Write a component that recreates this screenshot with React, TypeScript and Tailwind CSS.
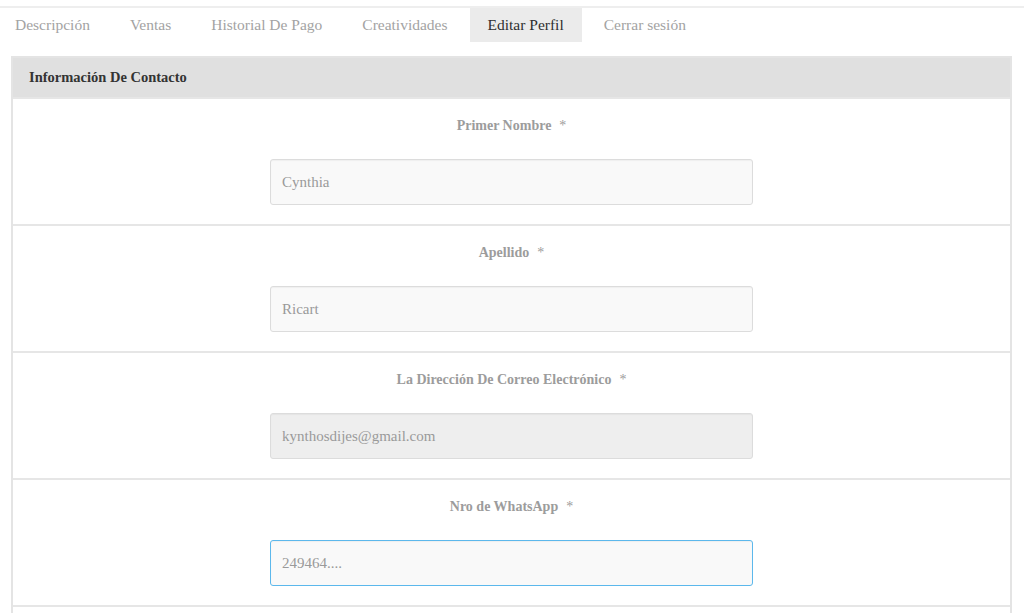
const TABS = [
  { label: 'Descripción' },
  { label: 'Ventas' },
  { label: 'Historial De Pago' },
  { label: 'Creatividades' },
  { label: 'Editar Perfil', active: true },
  { label: 'Cerrar sesión' },
];

const FIELDS = [
  { label: 'Primer Nombre', value: 'Cynthia' },
  { label: 'Apellido', value: 'Ricart' },
  { label: 'La Dirección De Correo Electrónico', value: 'kynthosdijes@gmail.com', disabled: true },
  { label: 'Nro de WhatsApp', value: '249464....', focused: true },
];

export default function App() {
  return (
    <div
      className="h-[613px] w-[1024px] overflow-hidden bg-white pt-[6px]"
      style={{ fontFamily: '"Liberation Serif", "DejaVu Serif", serif' }}
    >
      {/* linea superior + pestañas */}
      <div className="border-t-2 border-[#eeeeee]">
        <ul className="flex gap-[4px]">
          {TABS.map((t, i) => (
            <li
              key={t.label}
              className={
                'flex h-[34px] items-center pr-[18px] text-[15.5px] ' +
                (i === 0 ? 'pl-[15px] ' : 'pl-[18px] ') +
                (t.active ? 'bg-[#ebebeb] text-[#2f2f2f]' : 'text-[#a3a3a3]')
              }
            >
              {t.label}
            </li>
          ))}
        </ul>
      </div>

      {/* panel de contacto */}
      <div className="ml-[11px] mt-[14px] w-[1001px] border-x-2 border-t-2 border-[#e4e4e4]">
        <div className="flex h-[39px] items-center bg-[#e0e0e0] pl-[16px] text-[14.5px] font-bold text-[#333333]">
          Información De Contacto
        </div>
        {FIELDS.map((f) => (
          <div key={f.label} className="border-t-2 border-[#e6e6e6] pb-[19px] pt-[17px]">
            <div className="h-[20px] text-center text-[14px] font-bold leading-[20px] text-[#9c9c9c]">
              {f.label}
              <span className="ml-[8px] font-normal">*</span>
            </div>
            <div
              className={
                'mx-auto mt-[23px] flex h-[46px] w-[483px] items-center rounded-[3px] border px-[11px] text-[15px] text-[#9a9a9a] shadow-[inset_0_1px_1px_rgba(0,0,0,0.04)] ' +
                (f.disabled
                  ? 'border-[#dcdcdc] bg-[#eeeeee]'
                  : f.focused
                    ? 'border-[#5cb8ec] bg-[#f9f9f9]'
                    : 'border-[#dcdcdc] bg-[#f9f9f9]')
              }
            >
              {f.value}
            </div>
          </div>
        ))}
        <div className="h-[20px] border-t-2 border-[#e6e6e6]" />
      </div>
    </div>
  );
}
